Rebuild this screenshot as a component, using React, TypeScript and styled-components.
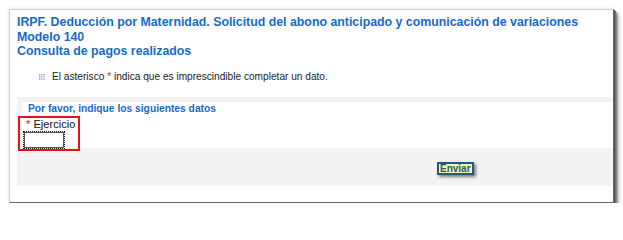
import React from "react";
import styled, { createGlobalStyle } from "styled-components";

const Global = createGlobalStyle`
  html, body { margin: 0; padding: 0; background: #ffffff; }
  body { font-family: "Liberation Sans", Arial, sans-serif; }
`;

const Page = styled.div`
  padding: 9px 0 0 9px;
`;

const Card = styled.div`
  box-sizing: border-box;
  width: 605px;
  height: 194px;
  background: #fff;
  border: 1px solid #d2d2d2;
  border-right-color: #666;
  border-bottom-color: #666;
  box-shadow: 1px 1px 0 #555, 2px 2px 0 #6e6e6e, 3px 3px 2px rgba(0, 0, 0, 0.5),
    5px 5px 4px rgba(0, 0, 0, 0.25), 0 0 3px rgba(0, 0, 0, 0.15);
  padding: 5px 0 15px 7px;
`;

const Title = styled.h1`
  margin: 0;
  font-size: 12.35px;
  line-height: 14.5px;
  font-weight: bold;
  color: #176ac8;
`;

const Info = styled.div`
  display: flex;
  align-items: center;
  gap: 7px;
  margin-top: 11px;
  padding-left: 22px;
  font-size: 10.15px;
  line-height: 14px;
  color: #222;
`;

const Required = styled.span`
  color: #e8141a;
`;

const Section = styled.div`
  position: relative;
  margin-top: 13px;
  background: #f3f3f3;
  padding: 5px 0 0 5px;
`;

const Panel = styled.div`
  background: #fff;
  height: 46px;
  display: flex;
  flex-direction: column;
`;

const Heading = styled.div`
  padding: 1px 0 0 6px;
  font-size: 10.25px;
  line-height: 12px;
  font-weight: bold;
  color: #176ac8;
`;

const Field = styled.div`
  display: flex;
  flex-direction: column;
  align-items: flex-start;
  padding: 3px 0 0 2px;
`;

const Label = styled.label`
  padding-left: 2px;
  font-size: 11.1px;
  line-height: 13px;
  color: #111;
`;

const Input = styled.div`
  box-sizing: border-box;
  margin-top: 1px;
  width: 40px;
  height: 16px;
  background: #fff;
  border: 1px solid #555;
  outline: 1px dotted #111;
`;

const Highlight = styled.div`
  position: absolute;
  left: 1px;
  top: 19px;
  width: 62px;
  height: 35px;
  box-sizing: border-box;
  border: 2px solid #ea1016;
  pointer-events: none;
`;

const Footer = styled.div`
  box-sizing: border-box;
  height: 38px;
  display: flex;
  align-items: flex-start;
  padding: 14px 0 0 415px;
`;

const SendButton = styled.button`
  box-sizing: border-box;
  height: 13px;
  padding: 0 1px;
  border: 2px solid #1c5d7c;
  background: #f8f3b6;
  color: #24596b;
  font-family: "Liberation Sans", Arial, sans-serif;
  font-size: 10px;
  font-weight: bold;
  line-height: 9px;
  box-shadow: 2px 2px 3px rgba(0, 0, 0, 0.5);
  cursor: pointer;
`;

const Bullet = () => (
  <svg width="6" height="6" viewBox="0 0 6 6" aria-hidden="true">
    {[0, 2.2, 4.4].map((y) =>
      [0, 2.2, 4.4].map((x) => (
        <rect key={`${x}-${y}`} x={x} y={y} width="1.4" height="1.4" fill="#8ea8cf" />
      ))
    )}
  </svg>
);

export default function App() {
  return (
    <>
      <Global />
      <Page>
        <Card>
          <Title>
            IRPF. Deducción por Maternidad. Solicitud del abono anticipado y comunicación de variaciones
            <br />
            Modelo 140
            <br />
            Consulta de pagos realizados
          </Title>
          <Info>
            <Bullet />
            <span>
              El asterisco <Required>*</Required> indica que es imprescindible completar un dato.
            </span>
          </Info>
          <Section>
            <Panel>
              <Heading>Por favor, indique los siguientes datos</Heading>
              <Field>
                <Label>
                  <Required>*</Required> Ejercicio
                </Label>
                <Input />
              </Field>
            </Panel>
            <Footer>
              <SendButton type="button">Enviar</SendButton>
            </Footer>
            <Highlight />
          </Section>
        </Card>
      </Page>
    </>
  );
}
